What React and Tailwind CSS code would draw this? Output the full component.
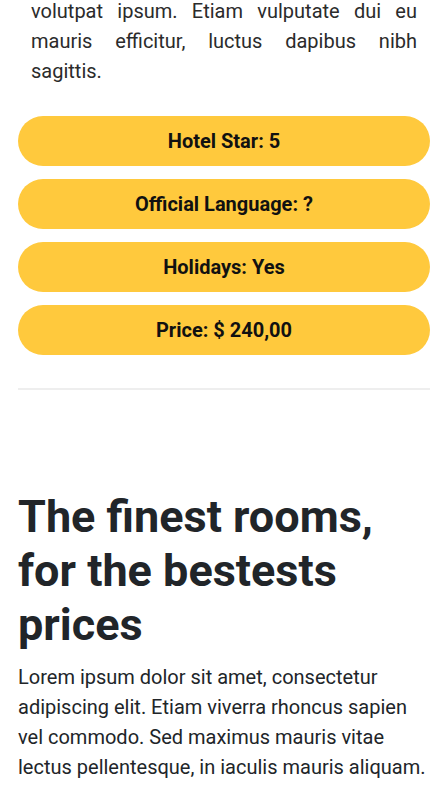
import React from "react";

const facts = ["Hotel Star: 5", "Official Language: ?", "Holidays: Yes", "Price: $ 240,00"];

export default function App() {
  return (
    <div className="min-h-screen bg-white font-['Roboto',sans-serif] overflow-hidden">
      <div className="px-[18px]">
        <p className="-mt-[4px] px-[13px] text-[20px] leading-[30px] text-[#2b2b2b] text-justify">
          <span className="block [text-align-last:justify]">volutpat ipsum. Etiam vulputate dui eu</span>
          <span className="block [text-align-last:justify]">mauris efficitur, luctus dapibus nibh</span>
          <span className="block">sagittis.</span>
        </p>

        <div className="mt-[30px] flex flex-col gap-[13px]">
          {facts.map((f) => (
            <div
              key={f}
              className="h-[50px] rounded-full bg-[#ffc93d] flex items-center justify-center text-[20px] font-bold text-[#111]"
            >
              {f}
            </div>
          ))}
        </div>

        <hr className="mt-[33px] border-0 h-[2px] bg-[#eeeeee]" />

        <h2 className="mt-[100px] text-[45px] leading-[54px] font-bold text-[#212529]">
          The finest rooms, for the bestests prices
        </h2>
        <p className="mt-[10px] text-[20px] leading-[30px] text-[#212529]">
          Lorem ipsum dolor sit amet, consectetur adipiscing elit. Etiam viverra rhoncus sapien vel commodo. Sed maximus
          mauris vitae lectus pellentesque, in iaculis mauris aliquam.
        </p>
      </div>
    </div>
  );
}
